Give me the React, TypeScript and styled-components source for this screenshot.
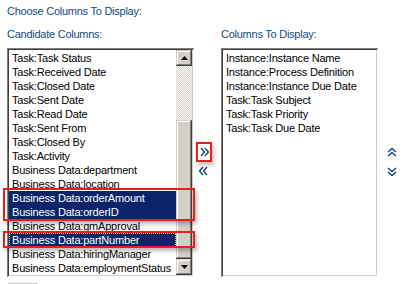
import styled, { createGlobalStyle } from 'styled-components'

const GlobalStyle = createGlobalStyle`
  html, body {
    margin: 0;
    padding: 0;
    background: #ffffff;
    overflow: hidden;
  }
  body {
    font-family: "Liberation Sans", Arial, sans-serif;
    font-size: 11px;
  }
`

const Page = styled.div`
  padding: 4px 0 0 7px;
  width: 403px;
  height: 280px;
`

const Heading = styled.div`
  color: #134b85;
  line-height: 14px;
  height: 14px;
  letter-spacing: -0.25px;
`

const Columns = styled.div`
  display: flex;
  align-items: flex-start;
  margin-top: 9px;
`

const Column = styled.div<{ $width: number }>`
  display: flex;
  flex-direction: column;
  width: ${(p) => p.$width}px;
  gap: 7px;
`

const ListBox = styled.div<{ $height: number }>`
  position: relative;
  display: flex;
  height: ${(p) => p.$height}px;
  padding: 2px;
  box-sizing: border-box;
  background: #ffffff;
  box-shadow: inset 1px 1px #808080, inset -1px -1px #ffffff,
    inset 2px 2px #404040, inset -2px -2px #d4d0c8;
`

const Items = styled.div`
  flex: 1;
  padding-top: 1px;
  overflow: hidden;
`

const Item = styled.div<{ $selected?: boolean; $focused?: boolean }>`
  height: 14px;
  line-height: 14px;
  padding-left: 3px;
  white-space: nowrap;
  letter-spacing: -0.2px;
  color: ${(p) => (p.$selected ? '#ffffff' : '#000000')};
  background: ${(p) => (p.$selected ? '#0a246a' : 'transparent')};
  outline: ${(p) => (p.$focused ? '1px dotted #d8c860' : 'none')};
  outline-offset: -1px;
`

const ScrollBar = styled.div`
  display: flex;
  flex-direction: column;
  width: 16px;
`

const ScrollButton = styled.div`
  height: 16px;
  display: flex;
  align-items: center;
  justify-content: center;
  background: #d4d0c8;
  box-shadow: inset -1px -1px #404040, inset 1px 1px #d4d0c8,
    inset -2px -2px #808080, inset 2px 2px #ffffff;
`

const Track = styled.div`
  flex: 1;
  display: flex;
  flex-direction: column;
  background: repeating-conic-gradient(#d4d0c8 0 25%, #ffffff 0 50%) 0 0 / 2px 2px;
`

const Thumb = styled.div<{ $top: number }>`
  margin-top: ${(p) => p.$top}px;
  flex: 1;
  background: #d4d0c8;
  box-shadow: inset -1px -1px #404040, inset 1px 1px #d4d0c8,
    inset -2px -2px #808080, inset 2px 2px #ffffff;
`

const Mark = styled.div<{ $top: number; $height: number }>`
  position: absolute;
  left: -4px;
  width: 192px;
  top: ${(p) => p.$top}px;
  height: ${(p) => p.$height}px;
  box-sizing: border-box;
  border: 2px solid #ee1c1c;
  box-shadow: 2px 3px 4px rgba(0, 0, 0, 0.28);
  pointer-events: none;
`

const MoveColumn = styled.div`
  display: flex;
  flex-direction: column;
  width: 27px;
  padding: 115px 0 0 2px;
  box-sizing: border-box;
`

const MoveButton = styled.div<{ $marked?: boolean }>`
  width: 16px;
  height: ${(p) => (p.$marked ? 20 : 14)}px;
  box-sizing: border-box;
  display: flex;
  align-items: center;
  justify-content: center;
  border: 2px solid ${(p) => (p.$marked ? '#ee1c1c' : 'transparent')};
  box-shadow: ${(p) => (p.$marked ? '2px 3px 4px rgba(0,0,0,0.25)' : 'none')};
  margin-bottom: 2px;
`

const OrderColumn = styled.div`
  display: flex;
  flex-direction: column;
  gap: 10px;
  padding: 120px 0 0 9px;
`

const Footer = styled.div`
  margin: 6px 0 0 1px;
  width: 28px;
  height: 6px;
  border-top: 1px solid #c8c8c8;
  border-right: 1px solid #808080;
`

function Chevrons({ dir, offset = 0 }: { dir: 'left' | 'right' | 'up' | 'down'; offset?: number }) {
  const rot = { right: 0, down: 90, left: 180, up: 270 }[dir]
  return (
    <svg width="10" height="10" viewBox="0 0 10 10" style={{ transform: `translateX(${offset}px)` }}>
      <g transform={`rotate(${rot} 5 5)`} fill="none" stroke="#0f4682" strokeWidth="1.4">
        <polyline points="1,1 4.5,5 1,9" />
        <polyline points="5,1 8.5,5 5,9" />
      </g>
    </svg>
  )
}

function Triangle({ up }: { up?: boolean }) {
  return (
    <svg width="7" height="4" viewBox="0 0 7 4">
      <polygon points={up ? '3.5,0 7,4 0,4' : '0,0 7,0 3.5,4'} fill="#000" />
    </svg>
  )
}

const candidates = [
  'Task:Task Status',
  'Task:Received Date',
  'Task:Closed Date',
  'Task:Sent Date',
  'Task:Read Date',
  'Task:Sent From',
  'Task:Closed By',
  'Task:Activity',
  'Business Data:department',
  'Business Data:location',
  'Business Data:orderAmount',
  'Business Data:orderID',
  'Business Data:gmApproval',
  'Business Data:partNumber',
  'Business Data:hiringManager',
  'Business Data:employmentStatus',
]

const selected = ['Business Data:orderAmount', 'Business Data:orderID', 'Business Data:partNumber']

const display = [
  'Instance:Instance Name',
  'Instance:Process Definition',
  'Instance:Instance Due Date',
  'Task:Task Subject',
  'Task:Task Priority',
  'Task:Task Due Date',
]

export default function App() {
  return (
    <Page>
      <GlobalStyle />
      <Heading>Choose Columns To Display:</Heading>
      <Columns>
        <Column $width={187}>
          <Heading>Candidate Columns:</Heading>
          <ListBox $height={229}>
            <Items>
              {candidates.map((c) => (
                <Item
                  key={c}
                  $selected={selected.includes(c)}
                  $focused={c === 'Business Data:partNumber'}
                >
                  {c}
                </Item>
              ))}
            </Items>
            <ScrollBar>
              <ScrollButton>
                <Triangle up />
              </ScrollButton>
              <Track>
                <Thumb $top={54} />
              </Track>
              <ScrollButton>
                <Triangle />
              </ScrollButton>
            </ScrollBar>
            <Mark $top={140} $height={33} />
            <Mark $top={183} $height={17} />
          </ListBox>
        </Column>
        <MoveColumn>
          <MoveButton $marked>
            <Chevrons dir="right" offset={1} />
          </MoveButton>
          <MoveButton>
            <Chevrons dir="left" offset={-1} />
          </MoveButton>
        </MoveColumn>
        <Column $width={157}>
          <Heading>Columns To Display:</Heading>
          <ListBox $height={229}>
            <Items>
              {display.map((c) => (
                <Item key={c}>{c}</Item>
              ))}
            </Items>
          </ListBox>
        </Column>
        <OrderColumn>
          <Chevrons dir="up" />
          <Chevrons dir="down" />
        </OrderColumn>
      </Columns>
      <Footer />
    </Page>
  )
}
